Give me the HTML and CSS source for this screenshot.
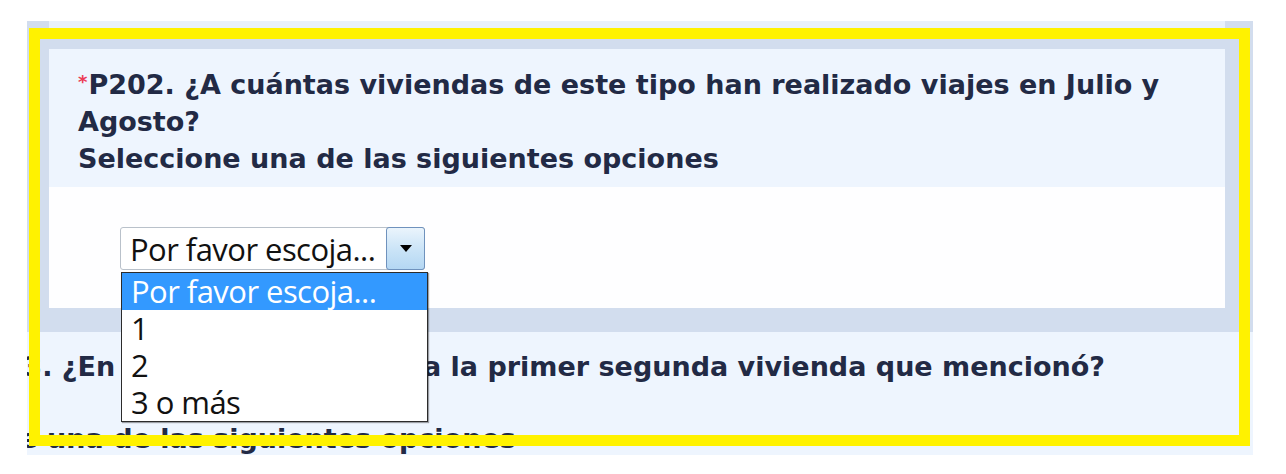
FILE: index.html
```html
<!DOCTYPE html>
<html lang="es">
<head>
<meta charset="utf-8">
<title>P202</title>
<link rel="stylesheet" href="styles.css">
</head>
<body>
<div class="page">
  <div class="survey">
    <div class="qblock">
      <div class="qcol">
        <div class="panel">
          <div class="qhead">
            <p class="qtext"><span class="req">*</span>P202. ¿A cuántas viviendas de este tipo han realizado viajes en Julio y Agosto?</p>
            <p class="qhint">Seleccione una de las siguientes opciones</p>
          </div>
          <div class="qbody">
            <div class="combo">
              <span class="combo-value">Por favor escoja...</span>
              <span class="combo-btn">
                <svg width="12" height="7" viewBox="0 0 12 7"><path d="M0 0H12L6 7Z" fill="#000"/></svg>
              </span>
              <ul class="combo-list">
                <li class="opt sel">Por favor escoja...</li>
                <li class="opt">1</li>
                <li class="opt">2</li>
                <li class="opt">3 o más</li>
              </ul>
            </div>
          </div>
        </div>
      </div>
    </div>
    <div class="qblock2">
      <p class="q2text">P203. ¿En cuál provincia queda la primer segunda vivienda que mencionó?</p>
      <p class="q2hint">Seleccione una de las siguientes opciones</p>
    </div>
  </div>
  <div class="highlight"></div>
</div>
</body>
</html>
```
FILE: styles.css
```css
html, body {
  margin: 0;
  padding: 0;
  background: #ffffff;
}

.page {
  position: relative;
  width: 1286px;
  height: 474px;
  padding: 21px 0 0 27px;
  box-sizing: border-box;
}

.survey {
  width: 1226px;
  height: 434px;
  overflow: hidden;
  background: #eef5fe;
  font-family: "DejaVu Sans", Verdana, sans-serif;
  font-weight: bold;
  color: #222a45;
}

.qblock {
  display: flex;
  background: #d2ddee;
  padding: 0 28px 24px 22px;
}

.qcol {
  flex: 1;
  padding-top: 28px;
  background: linear-gradient(#e9f1fb 0 7px, #d2ddee 7px 100%);
}

.panel {
  display: flex;
  flex-direction: column;
}

.qhead {
  background: #eef5fe;
  height: 138px;
  box-sizing: border-box;
  padding: 14px 30px 0 29px;
}

.qtext, .qhint {
  margin: 0;
  font-size: 27px;
  line-height: 37px;
}

.req {
  color: #ec3b55;
  font-size: 18px;
  vertical-align: 6px;
  margin-right: 1px;
}

.qbody {
  background: #fefeff;
  height: 121px;
  padding: 40px 0 0 71px;
  box-sizing: border-box;
}

.combo {
  position: relative;
  display: flex;
  width: 305px;
  height: 43px;
  box-sizing: border-box;
  border: 1px solid #b9c1ca;
  border-radius: 3px;
  background: #ffffff;
  font-family: "Open Sans", "Noto Sans", sans-serif;
  font-weight: normal;
  color: #111;
}

.combo-value {
  flex: 1;
  padding-left: 9px;
  font-size: 31px;
  line-height: 42px;
  letter-spacing: -0.55px;
  white-space: nowrap;
  overflow: hidden;
}

.combo-btn {
  display: flex;
  align-items: center;
  justify-content: center;
  width: 39px;
  margin: -1px -1px -1px 0;
  box-sizing: border-box;
  border: 1px solid #6f92bd;
  border-radius: 3px;
  background: linear-gradient(#eaf4fc, #c9e3f7 55%, #b4d7f3);
}

.combo-list {
  position: absolute;
  left: 0;
  top: 44px;
  width: 307px;
  margin: 0;
  padding: 0;
  list-style: none;
  background: #ffffff;
  border: 1px solid #2b2b2b;
  box-shadow: 1px 1px 1px rgba(0, 0, 0, 0.35);
  box-sizing: border-box;
}

.opt {
  height: 37px;
  padding-left: 9px;
  font-size: 31px;
  line-height: 37px;
  letter-spacing: -0.55px;
  white-space: nowrap;
  color: #111;
}

.opt.sel {
  background: #3399ff;
  color: #ffffff;
}

.qblock2 {
  height: 123px;
  box-sizing: border-box;
  padding-top: 16px;
  background: #eef5fe;
}

.q2text, .q2hint {
  margin: 0;
  white-space: nowrap;
  font-size: 27px;
  line-height: 37px;
}

.q2text {
  margin-left: -61px;
}

.q2hint {
  margin-top: 35px;
  margin-left: -152px;
}

.highlight {
  position: absolute;
  left: 29px;
  top: 28px;
  width: 1221px;
  height: 418px;
  box-sizing: border-box;
  border: 11px solid #fff200;
}
```
